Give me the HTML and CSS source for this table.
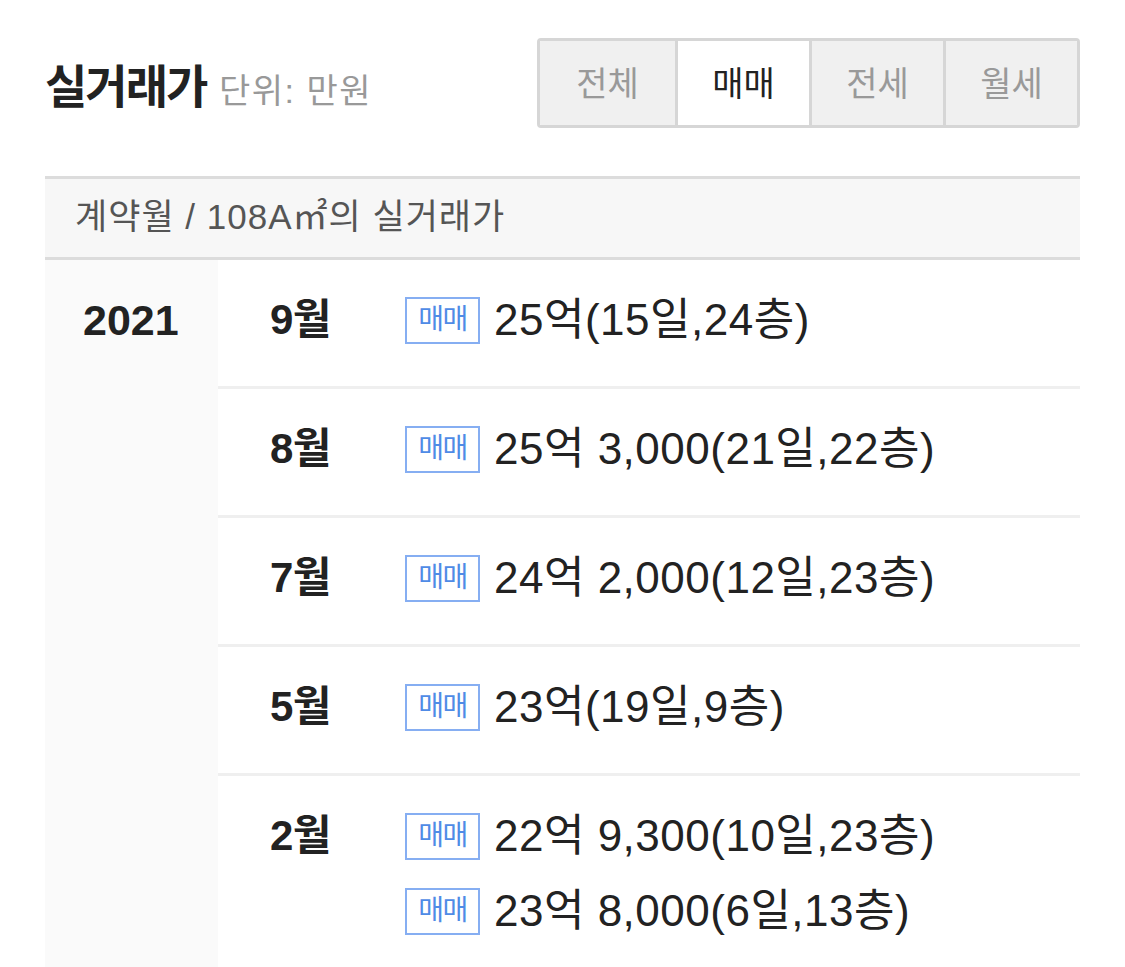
FILE: index.html
```html
<!DOCTYPE html>
<html lang="ko">
<head>
    <meta charset="UTF-8">
    <meta name="viewport" content="width=device-width, initial-scale=1.0">
    <title>실거래가</title>
    <link rel="stylesheet" href="styles.css">
</head>
<body>
    <div class="price-page">
        <div class="top-bar">
            <h2 class="title">실거래가 <span class="unit">단위: 만원</span></h2>
            <div class="tabs">
                <button class="tab">전체</button>
                <button class="tab active">매매</button>
                <button class="tab">전세</button>
                <button class="tab">월세</button>
            </div>
        </div>

        <div class="table-head">계약월 / 108A㎡의 실거래가</div>

        <div class="year-block">
            <div class="year">2021</div>
            <div class="months">
                <div class="month-row">
                    <div class="month">9월</div>
                    <div class="deals">
                        <div class="deal"><span class="badge">매매</span><span class="price">25억(15일,24층)</span></div>
                    </div>
                </div>
                <div class="month-row">
                    <div class="month">8월</div>
                    <div class="deals">
                        <div class="deal"><span class="badge">매매</span><span class="price">25억 3,000(21일,22층)</span></div>
                    </div>
                </div>
                <div class="month-row">
                    <div class="month">7월</div>
                    <div class="deals">
                        <div class="deal"><span class="badge">매매</span><span class="price">24억 2,000(12일,23층)</span></div>
                    </div>
                </div>
                <div class="month-row">
                    <div class="month">5월</div>
                    <div class="deals">
                        <div class="deal"><span class="badge">매매</span><span class="price">23억(19일,9층)</span></div>
                    </div>
                </div>
                <div class="month-row">
                    <div class="month">2월</div>
                    <div class="deals">
                        <div class="deal"><span class="badge">매매</span><span class="price">22억 9,300(10일,23층)</span></div>
                        <div class="deal"><span class="badge">매매</span><span class="price">23억 8,000(6일,13층)</span></div>
                    </div>
                </div>
            </div>
        </div>
    </div>
</body>
</html>
```

FILE: styles.css
```css
* {
    margin: 0;
    padding: 0;
    box-sizing: border-box;
}

body {
    font-family: "Liberation Sans", "Noto Sans CJK KR", sans-serif;
    background: #fff;
    color: #222;
    height: 967px;
    overflow: hidden;
}

.price-page {
    padding: 38px 45px 0;
}

.top-bar {
    display: flex;
    align-items: center;
    justify-content: space-between;
}

.title {
    font-size: 46px;
    font-weight: 700;
    color: #222;
    letter-spacing: -2px;
}

.unit {
    margin-left: 2px;
    font-size: 34px;
    font-weight: 400;
    color: #999;
    letter-spacing: 1.5px;
}

.tabs {
    display: flex;
    border: 3px solid #d6d6d6;
    border-radius: 4px;
    overflow: hidden;
}

.tab {
    width: 134px;
    height: 84px;
    border: none;
    border-left: 3px solid #d6d6d6;
    background: #f0f0f0;
    color: #999;
    font-family: inherit;
    font-size: 34px;
    padding-bottom: 4px;
}

.tab:first-child {
    border-left: none;
    width: 135px;
}

.tab.active {
    background: #fff;
    color: #222;
}

.table-head {
    margin-top: 48px;
    border-top: 3px solid #dcdcdc;
    border-bottom: 3px solid #dcdcdc;
    background: #f7f7f7;
    height: 84px;
    padding-left: 30px;
    font-size: 35px;
    line-height: 76px;
    color: #555;
    letter-spacing: 1px;
}

.year-block {
    display: flex;
    min-height: 720px;
}

.year {
    width: 173px;
    flex-shrink: 0;
    background: #fafafa;
    padding: 36px 0 0 38px;
    font-size: 43px;
    font-weight: 700;
    line-height: 48px;
}

.months {
    flex: 1;
}

.month-row {
    display: flex;
    padding: 36px 0 42px;
    border-bottom: 3px solid #efefef;
}

.month {
    width: 187px;
    padding-left: 52px;
    font-size: 42px;
    font-weight: 700;
    line-height: 48px;
    letter-spacing: -0.5px;
}

.deals {
    display: flex;
    flex-direction: column;
    gap: 27px;
}

.deal {
    display: flex;
    align-items: center;
    gap: 14px;
    height: 48px;
}

.badge {
    width: 75px;
    height: 47px;
    border: 2px solid #86aef2;
    color: #4f8be6;
    font-size: 28px;
    line-height: 41px;
    text-align: center;
    letter-spacing: -1.5px;
}

.price {
    font-size: 44px;
    line-height: 48px;
    color: #222;
    letter-spacing: 0.5px;
}
```
